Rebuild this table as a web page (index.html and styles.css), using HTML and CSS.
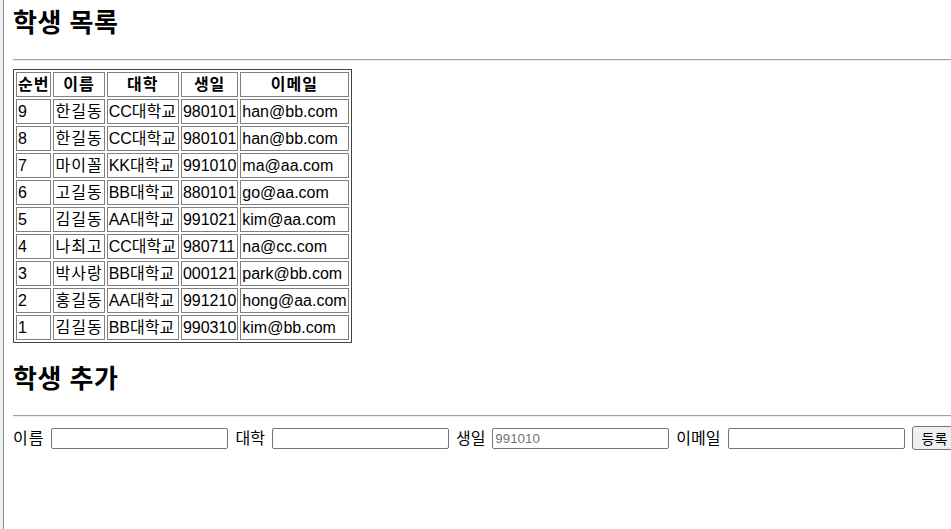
FILE: index.html
```html
<!DOCTYPE html>
<html lang="ko">
<head>
    <meta charset="UTF-8">
    <meta name="viewport" content="width=device-width, initial-scale=1.0">
    <title>학생 관리</title>
    <link rel="stylesheet" href="styles.css">
</head>
<body>
    <h2 class="first">학생 목록</h2>
    <hr>
    <table class="students">
        <thead>
            <tr>
                <th>순번</th>
                <th>이름</th>
                <th>대학</th>
                <th>생일</th>
                <th>이메일</th>
            </tr>
        </thead>
        <tbody>
            <tr><td>9</td><td>한길동</td><td>CC대학교</td><td>980101</td><td>han@bb.com</td></tr>
            <tr><td>8</td><td>한길동</td><td>CC대학교</td><td>980101</td><td>han@bb.com</td></tr>
            <tr><td>7</td><td>마이꼴</td><td>KK대학교</td><td>991010</td><td>ma@aa.com</td></tr>
            <tr><td>6</td><td>고길동</td><td>BB대학교</td><td>880101</td><td>go@aa.com</td></tr>
            <tr><td>5</td><td>김길동</td><td>AA대학교</td><td>991021</td><td>kim@aa.com</td></tr>
            <tr><td>4</td><td>나최고</td><td>CC대학교</td><td>980711</td><td>na@cc.com</td></tr>
            <tr><td>3</td><td>박사랑</td><td>BB대학교</td><td>000121</td><td>park@bb.com</td></tr>
            <tr><td>2</td><td>홍길동</td><td>AA대학교</td><td>991210</td><td>hong@aa.com</td></tr>
            <tr><td>1</td><td>김길동</td><td>BB대학교</td><td>990310</td><td>kim@bb.com</td></tr>
        </tbody>
    </table>

    <h2>학생 추가</h2>
    <hr>
    <form class="add-form" onsubmit="return false">
        <label for="name" class="lead">이름</label>
        <input type="text" id="name">
        <label for="univ">대학</label>
        <input type="text" id="univ">
        <label for="birth">생일</label>
        <input type="text" id="birth" placeholder="991010">
        <label for="email">이메일</label>
        <input type="text" id="email">
        <button type="submit">등록</button>
    </form>
</body>
</html>
```

FILE: styles.css
```css
html {
    border-left: 3px solid #f0f0f0;
    overflow: hidden;
}

body {
    font-family: "Liberation Sans", "Noto Sans CJK KR", sans-serif;
    font-size: 16px;
    line-height: 21px;
    color: #000;
    background: #fff;
    margin: 0;
    padding-left: 9px;
    border-left: 1px solid #8a8a8a;
    min-height: 100vh;
}

h2 {
    font-size: 26px;
    line-height: 32px;
    letter-spacing: 0.5px;
    font-weight: bold;
    margin: 20px 0;
}

h2.first {
    margin-top: 7px;
}

hr {
    margin: 8px 0;
    border: none;
    border-top: 1px solid #a0a0a0;
    border-bottom: 1px solid #eeeeee;
}

.students {
    border: 1px solid #444;
    border-spacing: 2px;
}

.students th,
.students td {
    border: 1px solid #808080;
    padding: 1px;
}

.students th {
    font-weight: bold;
    text-align: center;
    letter-spacing: 1px;
}

.students td {
    text-align: left;
}

/* name column is hangul only, widen a little */
.students td:nth-child(2) {
    letter-spacing: 1px;
}

.students td:nth-child(3) {
    padding-right: 2px;
}

.add-form {
    display: flex;
    align-items: center;
    white-space: nowrap;
    height: 26px;
}

.add-form label {
    margin-right: 7px;
}

.add-form label.lead {
    letter-spacing: 1px;
}

.add-form input {
    flex-shrink: 0;
    width: 177px;
    height: 21px;
    box-sizing: border-box;
    border: 1px solid #767676;
    border-radius: 2px;
    padding: 1px 2px;
    margin-right: 7px;
    font-family: "Liberation Sans", Arial, sans-serif;
    font-size: 13.33px;
}

.add-form input::placeholder {
    color: #757575;
}

.add-form button {
    flex-shrink: 0;
    height: 24px;
    padding: 1px 9px;
    border: 1px solid #767676;
    border-radius: 3px;
    background: #efefef;
    font-family: "Noto Sans CJK KR", sans-serif;
    font-size: 14px;
}
```
